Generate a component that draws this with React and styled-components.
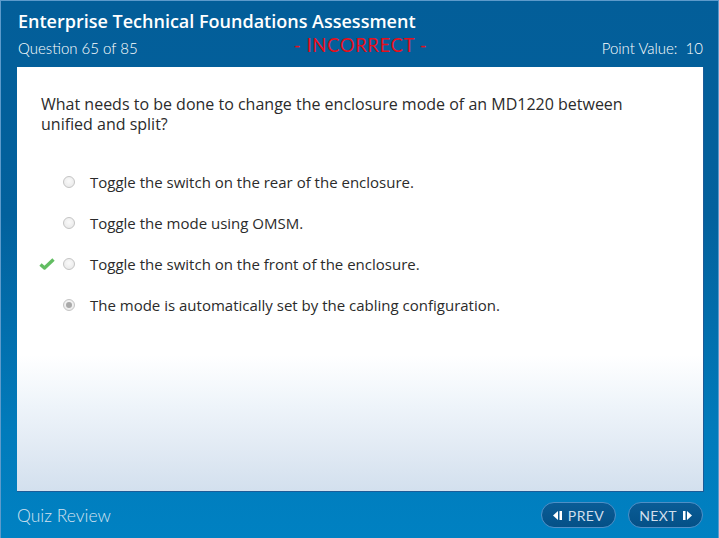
import styled, { createGlobalStyle } from "styled-components";

const Global = createGlobalStyle`
  html, body {
    margin: 0;
    padding: 0;
    width: 719px;
    height: 538px;
    overflow: hidden;
  }
`;

const Frame = styled.div`
  box-sizing: border-box;
  width: 719px;
  height: 538px;
  display: flex;
  flex-direction: column;
  border: 1px solid #5d9acb;
  border-bottom: none;
  background: linear-gradient(#035e99 0%, #03619d 40%, #017bbb 80%, #0081c2 100%);
  font-family: Lato, "Open Sans", sans-serif;
`;

const Header = styled.div`
  padding: 8px 15px 0 17px;
  height: 66px;
  box-sizing: border-box;
  color: #fff;
`;

const Title = styled.h1`
  margin: 0;
  font-family: "Open Sans", sans-serif;
  font-size: 18px;
  font-weight: 600;
  line-height: 24px;
`;

const SubRow = styled.div`
  display: grid;
  grid-template-columns: 1fr auto 1fr;
  align-items: center;
  height: 30px;
  font-size: 15px;
  font-weight: 300;
`;

const Status = styled.span`
  color: #e5101c;
  font-size: 18.5px;
  font-weight: 400;
  letter-spacing: 0.6px;
  margin-top: -6px;
`;

const Right = styled.span`
  justify-self: end;
`;

const Panel = styled.div`
  margin: 0 14px 0 16px;
  height: 425px;
  box-sizing: border-box;
  border-bottom: 1px solid #1c5c98;
  border-right: 1px solid #1c5c98;
  background: linear-gradient(#fff 0%, #fff 68%, #eef4fa 80%, #e4ecf5 88%, #d3e0ee 100%);
  padding: 27px 24px 0 24px;
  font-family: "Open Sans", sans-serif;
  color: #2b2b2b;
`;

const Question = styled.p`
  margin: 0 0 27px 0;
  max-width: 600px;
  font-size: 16px;
  line-height: 20px;
`;

const Options = styled.ul`
  list-style: none;
  margin: 0;
  padding: 0;
`;

const Option = styled.li`
  display: flex;
  align-items: center;
  height: 41px;
  font-size: 15px;
`;

const Mark = styled.span`
  width: 24px;
  display: flex;
  align-items: center;
  margin-left: -2px;
`;

const Radio = styled.span`
  width: 12px;
  height: 12px;
  border-radius: 50%;
  box-sizing: border-box;
  border: 1px solid #c4c4c4;
  background: radial-gradient(circle at 50% 40%, #fafafa, #e6e6e6);
  display: flex;
  align-items: center;
  justify-content: center;
  margin-right: 15px;
  &::after {
    content: "";
    width: 6px;
    height: 6px;
    border-radius: 50%;
    background: ${(p) => (p.$checked ? "#a9a9a9" : "transparent")};
  }
`;

const Footer = styled.div`
  flex: 1;
  display: flex;
  align-items: center;
  justify-content: space-between;
  padding: 0 15px 0 16px;
`;

const FooterLabel = styled.span`
  color: #d3e2f0;
  font-size: 17.5px;
  font-weight: 300;
`;

const Nav = styled.div`
  display: flex;
  gap: 12px;
`;

const NavButton = styled.button`
  width: 75px;
  height: 26px;
  border-radius: 13px;
  border: 1px solid #4f8fc6;
  background: linear-gradient(#0a5c96, #045087);
  color: #d0deec;
  font-family: Lato, sans-serif;
  font-size: 14px;
  font-weight: 400;
  letter-spacing: 0.4px;
  display: flex;
  align-items: center;
  justify-content: center;
  gap: 6px;
  padding: 0;
`;

const Arrow = ({ dir }) => (
  <svg width="9" height="9" viewBox="0 0 9 9">
    {dir === "left" ? (
      <>
        <path d="M5 0 L0 4.5 L5 9 Z" fill="#fff" />
        <rect x="6.5" y="0" width="2.5" height="9" fill="#fff" />
      </>
    ) : (
      <>
        <rect x="0" y="0" width="2.5" height="9" fill="#fff" />
        <path d="M4 0 L9 4.5 L4 9 Z" fill="#fff" />
      </>
    )}
  </svg>
);

const Check = () => (
  <svg width="16" height="12" viewBox="0 0 16 12">
    <path d="M1.5 6.5 L5.5 10 L14.5 1.5" fill="none" stroke="#62bd62" strokeWidth="3.4" strokeLinejoin="round" />
  </svg>
);

const options = [
  { text: "Toggle the switch on the rear of the enclosure." },
  { text: "Toggle the mode using OMSM." },
  { text: "Toggle the switch on the front of the enclosure.", correct: true },
  { text: "The mode is automatically set by the cabling configuration.", checked: true },
];

export default function App() {
  return (
    <>
      <Global />
      <Frame>
        <Header>
          <Title>Enterprise Technical Foundations Assessment</Title>
          <SubRow>
            <span>Question 65 of 85</span>
            <Status>- INCORRECT -</Status>
            <Right>Point Value:&nbsp; 10</Right>
          </SubRow>
        </Header>
        <Panel>
          <Question>
            What needs to be done to change the enclosure mode of an MD1220 between unified and split?
          </Question>
          <Options>
            {options.map((o) => (
              <Option key={o.text}>
                <Mark>{o.correct && <Check />}</Mark>
                <Radio $checked={o.checked} />
                {o.text}
              </Option>
            ))}
          </Options>
        </Panel>
        <Footer>
          <FooterLabel>Quiz Review</FooterLabel>
          <Nav>
            <NavButton>
              <Arrow dir="left" />
              PREV
            </NavButton>
            <NavButton>
              NEXT
              <Arrow dir="right" />
            </NavButton>
          </Nav>
        </Footer>
      </Frame>
    </>
  );
}
